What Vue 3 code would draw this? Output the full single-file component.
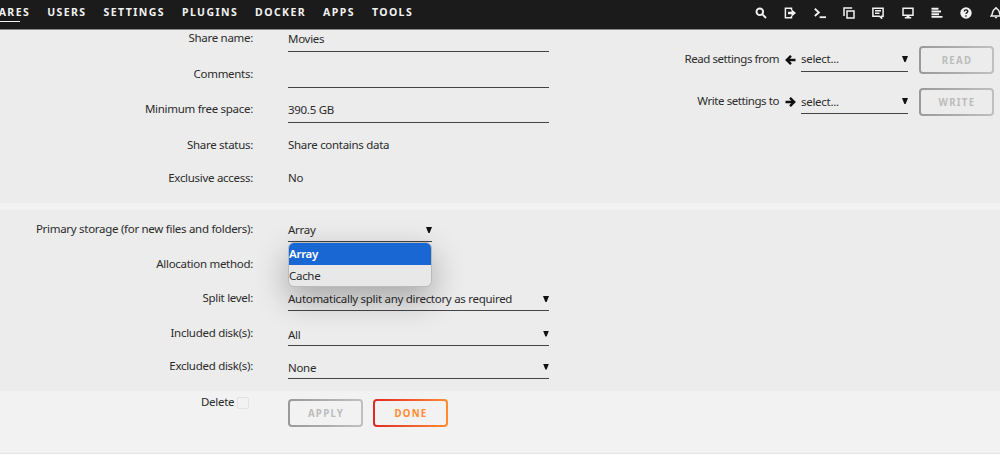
<script setup>
import { ref } from 'vue'

const menu = ['SHARES', 'USERS', 'SETTINGS', 'PLUGINS', 'DOCKER', 'APPS', 'TOOLS']

const details = [
  { label: 'Share name:', value: 'Movies', input: true },
  { label: 'Comments:', value: '', input: true },
  { label: 'Minimum free space:', value: '390.5 GB', input: true },
  { label: 'Share status:', value: 'Share contains data' },
  { label: 'Exclusive access:', value: 'No' }
]

const disks = [
  { label: 'Split level:', value: 'Automatically split any directory as required', name: 'split' },
  { label: 'Included disk(s):', value: 'All', name: 'included' },
  { label: 'Excluded disk(s):', value: 'None', name: 'excluded' }
]

const options = ['Array', 'Cache']
const storage = ref('Array')
const open = ref(true)

const choose = (option) => {
  storage.value = option
  open.value = false
}
</script>

<template>
  <div class="page">
    <header>
      <nav>
        <a v-for="item in menu" :key="item" :class="{ active: item === 'SHARES' }">{{ item }}</a>
      </nav>
      <div class="tools">
        <svg viewBox="0 0 12 12"><circle cx="4.8" cy="4.8" r="3.3" class="line thick" /><path d="M7.4 7.4 11 11" class="line thick" /></svg>
        <svg viewBox="0 0 12 12"><path d="M7.5 3V1.2H1.4v9.6h6.1V9" class="line" /><path d="M4 4.8h3.5V2.2L12 6 7.5 9.8V7.2H4z" /></svg>
        <svg viewBox="0 0 12 12"><path d="m.8 1.8 4 3.6-4 3.6" class="line thick" /><path d="M5.6 9.3H12v1.8H5.6z" /></svg>
        <svg viewBox="0 0 12 12"><path d="M4 4h7v7H4z" class="line" /><path d="M1 9V1h8.2" class="line" /></svg>
        <svg viewBox="0 0 12 12"><path d="M.9 1.2h10.2v8H9.6v2L7.4 9.2H.9z" class="line" /><path d="M3 3.8h6M3 6.3h4.5" class="line" /></svg>
        <svg viewBox="0 0 12 12"><path d="M1 1.2h10v7H1z" class="line" /><path d="M4.6 8h2.8v2h1.8v1.5H2.8V10h1.8z" /></svg>
        <svg viewBox="0 0 12 12"><path d="M.5 1.8h7M.5 4.5H10M.5 7.2H8M.5 9.9h11" class="line thick" /></svg>
        <svg viewBox="0 0 12 12"><circle cx="6" cy="6" r="5.7" /><path d="M4.2 4.5C4.4 2.3 7.9 2.5 7.8 4.5 7.7 5.7 6 5.7 6 7.1M6 8.3v1.4" class="cut" /></svg>
        <svg viewBox="0 0 12 12"><path d="M1.2 9C3 7.5 1.9 3 4.8 2.1L6 .8l1.2 1.3C10.1 3 9 7.5 10.8 9z" class="line" /><path d="M4.5 10h3L6 11.8z" /></svg>
      </div>
    </header>

    <section class="details">
      <dl>
        <div v-for="row in details" :key="row.label" class="row" :class="{ plain: !row.input }">
          <dt>{{ row.label }}</dt>
          <dd :class="{ field: row.input }">{{ row.value }}</dd>
        </div>
      </dl>
      <div class="copy">
        <div class="copy-row">
          <span>Read settings from</span>
          <svg class="arrow" viewBox="0 0 11 10"><path d="M6 .8 1.8 5 6 9.2M2 5h8.5" /></svg>
          <div class="field select">select...<i></i></div>
          <button disabled>READ</button>
        </div>
        <div class="copy-row second">
          <span>Write settings to</span>
          <svg class="arrow" viewBox="0 0 11 10"><path d="M5 .8 9.2 5 5 9.2M9 5H.5" /></svg>
          <div class="field select">select...<i></i></div>
          <button disabled>WRITE</button>
        </div>
      </div>
    </section>

    <section class="storage">
      <dl>
        <div class="row">
          <dt>Primary storage (for new files and folders):</dt>
          <dd class="field select short" @click="open = !open">
            {{ storage }}<i></i>
            <ul v-if="open">
              <li
                v-for="option in options"
                :key="option"
                :class="{ selected: option === storage }"
                @click.stop="choose(option)"
              >
                {{ option }}
              </li>
            </ul>
          </dd>
        </div>
        <div class="row allocation">
          <dt>Allocation method:</dt>
          <dd class="field short"></dd>
        </div>
        <div v-for="row in disks" :key="row.name" class="row" :class="row.name">
          <dt>{{ row.label }}</dt>
          <dd class="field select">{{ row.value }}<i></i></dd>
        </div>
      </dl>
    </section>

    <footer>
      <label>Delete <span class="check"></span></label>
      <button disabled>APPLY</button>
      <button class="done">DONE</button>
    </footer>
  </div>
</template>

<style>
body {
  background: #f2f2f2;
}
</style>

<style scoped>
.page {
  height: 454px;
  box-sizing: border-box;
  overflow: hidden;
  border-bottom: 1px solid #e3e3e3;
  background: #f2f2f2;
  color: #2b2b2b;
  font-family: "Noto Sans", sans-serif;
  font-size: 11.5px;
  line-height: 16px;
  letter-spacing: -0.29px;
}

header {
  display: flex;
  justify-content: space-between;
  height: 30px;
  background: #1b1b1b;
  border-bottom: 1px solid #888;
  box-sizing: border-box;
  overflow: hidden;
}

nav {
  display: flex;
  gap: 17px;
  margin-left: -18px;
}

nav a {
  height: 18px;
  margin-top: 4px;
  color: #f2f2f2;
  font-size: 10.5px;
  font-weight: 700;
  letter-spacing: 1.42px;
}

nav a.active {
  background: linear-gradient(#f2f2f2, #f2f2f2) left bottom / 38px 1.5px no-repeat;
}

.tools {
  display: flex;
  flex: none;
  gap: 17.3px;
  padding-top: 7px;
  margin-right: -1.5px;
}

.tools svg {
  width: 12px;
  height: 12px;
  fill: #f2f2f2;
}

.tools .line {
  fill: none;
  stroke: #f2f2f2;
  stroke-width: 1.5;
}

.tools .thick {
  stroke-width: 1.9;
}

.tools .cut {
  fill: none;
  stroke: #1b1b1b;
  stroke-width: 1.4;
}

section {
  background: #ececec;
}

dl,
dd {
  margin: 0;
}

.details {
  display: flex;
  justify-content: space-between;
  height: 173px;
}

.storage {
  height: 181px;
  margin-top: 7px;
  padding-top: 11px;
  box-sizing: border-box;
}

.row {
  display: grid;
  grid-template-columns: 253px 261px;
  column-gap: 35px;
  height: 35.5px;
}

.row.plain {
  height: 33px;
}

dt {
  text-align: right;
  white-space: nowrap;
}

.field {
  height: 22px;
  padding-top: 1px;
  border-bottom: 1px solid #444;
  box-sizing: border-box;
  white-space: nowrap;
}

.select {
  display: flex;
  justify-content: space-between;
  position: relative;
}

.select i {
  width: 6px;
  height: 6px;
  margin-top: 5px;
  background: #111;
  clip-path: polygon(0 0, 100% 0, 60% 100%, 40% 100%);
}

.storage .field {
  height: 21px;
}

.short {
  width: 144px;
}

.storage .row {
  height: 34.5px;
}

.storage .included {
  height: 33px;
}

.storage .included .field,
.storage .excluded .field {
  padding-top: 2px;
}

.included i,
.excluded i {
  margin-top: 4px;
}

.select ul {
  position: absolute;
  z-index: 1;
  top: 21px;
  left: 0;
  width: 144px;
  margin: 0;
  padding: 0;
  overflow: hidden;
  list-style: none;
  background: #e8e8e8;
  border: 1px solid #bbb;
  border-radius: 6px;
  box-sizing: border-box;
  box-shadow: 0 12px 32px rgba(0, 0, 0, 0.3);
}

.select li {
  height: 21.5px;
  line-height: 21px;
}

.select li.selected {
  background: #1967d2;
  color: #fff;
  font-weight: 600;
}

.copy {
  padding: 16px 6px 0 0;
}

.copy-row {
  display: flex;
  justify-content: flex-end;
  height: 42px;
}

.copy-row span {
  margin-top: 5px;
  letter-spacing: -0.43px;
}

.copy-row .field {
  width: 107px;
  height: 22px;
  margin: 4px 11px 0 5px;
}

.copy-row.second .field {
  padding-top: 2px;
}

.copy-row.second i {
  margin-top: 4px;
}

.arrow {
  width: 11px;
  height: 10px;
  margin: 9px 0 0 6px;
  fill: none;
  stroke: #111;
  stroke-width: 2.4;
}

button {
  width: 75px;
  height: 28px;
  padding: 0 0 0 1px;
  border: 2px solid transparent;
  border-radius: 4px;
  background:
    linear-gradient(#ececec, #ececec) padding-box,
    linear-gradient(90deg, #999, #c0c0c0) border-box;
  color: #bcbcbc;
  font: 700 9.7px "Noto Sans", sans-serif;
  letter-spacing: 1.25px;
}

footer {
  display: flex;
  padding-top: 8px;
}

footer label {
  display: flex;
  gap: 3px;
  width: 87px;
  height: 16px;
  margin: -5px 0 0 201px;
}

.check {
  width: 12px;
  height: 12px;
  margin-top: 3px;
  border: 1px solid #e2e2e2;
  border-radius: 2px;
  box-sizing: border-box;
}

footer button {
  margin-right: 10px;
  background:
    linear-gradient(#f2f2f2, #f2f2f2) padding-box,
    linear-gradient(90deg, #999, #c0c0c0) border-box;
}

footer .done {
  background:
    linear-gradient(#f2f2f2, #f2f2f2) padding-box,
    linear-gradient(90deg, #e22828, #ff8c2f) border-box;
  color: #ff8c2f;
}
</style>
